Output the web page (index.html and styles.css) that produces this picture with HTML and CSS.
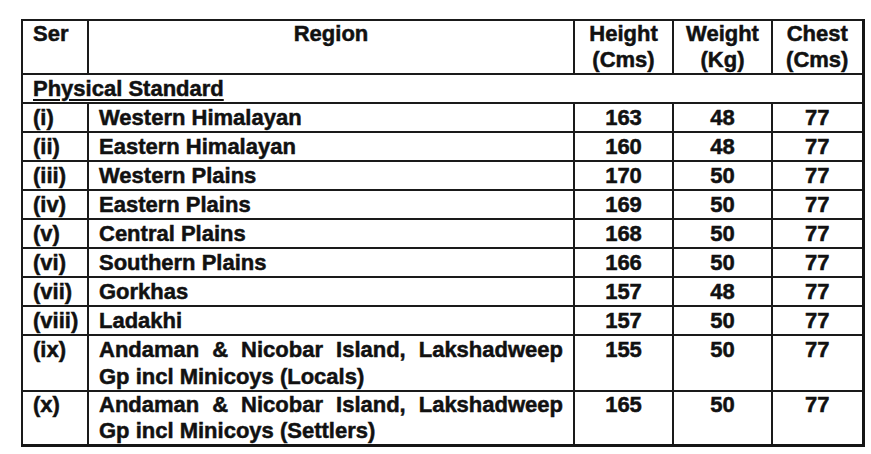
FILE: index.html
```html
<!DOCTYPE html>
<html>
<head>
<meta charset="utf-8">
<link rel="stylesheet" href="styles.css">
</head>
<body>
<table class="std">
  <colgroup>
    <col class="c-ser"><col class="c-region"><col class="c-num"><col class="c-num"><col class="c-chest">
  </colgroup>
  <thead>
    <tr class="head">
      <th class="ser">Ser</th>
      <th class="region-h">Region</th>
      <th>Height<br>(Cms)</th>
      <th>Weight<br>(Kg)</th>
      <th>Chest<br>(Cms)</th>
    </tr>
  </thead>
  <tbody>
    <tr class="section"><td colspan="5"><span class="ul">Physical Standard</span></td></tr>
    <tr><td class="ser">(i)</td><td class="region">Western Himalayan</td><td class="num">163</td><td class="num">48</td><td class="num">77</td></tr>
    <tr><td class="ser">(ii)</td><td class="region">Eastern Himalayan</td><td class="num">160</td><td class="num">48</td><td class="num">77</td></tr>
    <tr><td class="ser">(iii)</td><td class="region">Western Plains</td><td class="num">170</td><td class="num">50</td><td class="num">77</td></tr>
    <tr><td class="ser">(iv)</td><td class="region">Eastern Plains</td><td class="num">169</td><td class="num">50</td><td class="num">77</td></tr>
    <tr><td class="ser">(v)</td><td class="region">Central Plains</td><td class="num">168</td><td class="num">50</td><td class="num">77</td></tr>
    <tr><td class="ser">(vi)</td><td class="region">Southern Plains</td><td class="num">166</td><td class="num">50</td><td class="num">77</td></tr>
    <tr><td class="ser">(vii)</td><td class="region">Gorkhas</td><td class="num">157</td><td class="num">48</td><td class="num">77</td></tr>
    <tr><td class="ser">(viii)</td><td class="region">Ladakhi</td><td class="num">157</td><td class="num">50</td><td class="num">77</td></tr>
    <tr class="multi"><td class="ser">(ix)</td><td class="region">Andaman &amp; Nicobar Island, Lakshadweep Gp incl Minicoys (Locals)</td><td class="num">155</td><td class="num">50</td><td class="num">77</td></tr>
    <tr class="multi last"><td class="ser">(x)</td><td class="region">Andaman &amp; Nicobar Island, Lakshadweep Gp incl Minicoys (Settlers)</td><td class="num">165</td><td class="num">50</td><td class="num">77</td></tr>
  </tbody>
</table>
</body>
</html>
```
FILE: styles.css
```css
html, body {
  margin: 0;
  padding: 0;
  background: #ffffff;
}
body {
  padding: 19px 0 0 21px;
  font-family: "Liberation Sans", Arial, sans-serif;
  font-weight: bold;
  font-size: 22px;
  color: #111111;
  -webkit-text-stroke: 0.5px #111111;
}
.std {
  border-collapse: collapse;
  table-layout: fixed;
  width: 842px;
  border-top: 2px solid #151515;
  border-left: 2px solid #151515;
  border-right: 3px solid #151515;
  border-bottom: 3px solid #151515;
}
.c-ser { width: 66px; }
.c-region { width: 486px; }
.c-num { width: 99px; }
.c-chest { width: 91px; }
.std th, .std td {
  border: 2px solid #1a1a1a;
  padding: 0 10px;
  vertical-align: top;
  font-weight: bold;
}
.head th {
  line-height: 26px;
  text-align: center;
  padding-top: 0;
}
.head th.ser { text-align: left; }
.std td {
  line-height: 27px;
}
.std td.ser { padding-left: 10px; padding-right: 4px; }
.std td.num { text-align: center; padding: 0 4px; }
.region { text-align: justify; }
.ul {
  text-decoration: underline;
  text-decoration-thickness: 2px;
  text-underline-offset: 3px;
}
.multi td { line-height: 27px; }
.multi.last td { line-height: 26px; }
```
